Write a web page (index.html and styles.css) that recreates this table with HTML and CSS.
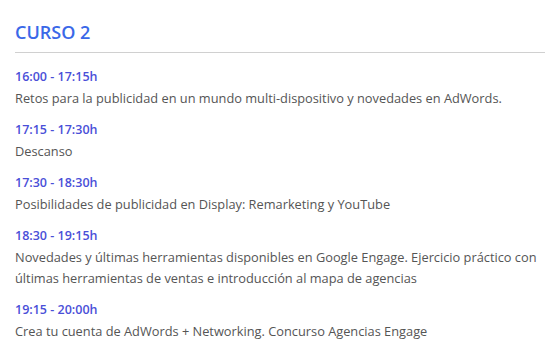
FILE: index.html
```html
<!DOCTYPE html>
<html lang="es">
<head>
<meta charset="utf-8">
<link rel="stylesheet" href="styles.css">
</head>
<body>
<section class="course">
  <h2 class="course-title">CURSO 2</h2>
  <div class="agenda">
    <div class="slot">
      <div class="time">16:00 - 17:15h</div>
      <p class="desc">Retos para la publicidad en un mundo multi-dispositivo y novedades en AdWords.</p>
    </div>
    <div class="slot">
      <div class="time">17:15 - 17:30h</div>
      <p class="desc">Descanso</p>
    </div>
    <div class="slot">
      <div class="time">17:30 - 18:30h</div>
      <p class="desc">Posibilidades de publicidad en Display: Remarketing y YouTube</p>
    </div>
    <div class="slot">
      <div class="time">18:30 - 19:15h</div>
      <p class="desc">Novedades y últimas herramientas disponibles en Google Engage. Ejercicio práctico con últimas herramientas de ventas e introducción al mapa de agencias</p>
    </div>
    <div class="slot">
      <div class="time">19:15 - 20:00h</div>
      <p class="desc">Crea tu cuenta de AdWords + Networking. Concurso Agencias Engage</p>
    </div>
  </div>
</section>
</body>
</html>
```

FILE: styles.css
```css
html, body {
  margin: 0;
  padding: 0;
  background: #ffffff;
}
body {
  font-family: "Open Sans", "Noto Sans", sans-serif;
}
.course {
  width: 530px;
  padding: 19px 0 0 15px;
}
.course-title {
  margin: 0;
  font-size: 18px;
  font-weight: 600;
  line-height: 26px;
  color: #3a68e8;
  padding-bottom: 7px;
  border-bottom: 1px solid #d0d0d0;
}
.agenda {
  display: flex;
  flex-direction: column;
  gap: 10px;
  padding-top: 13px;
}
.time {
  font-size: 12.5px;
  font-weight: 600;
  line-height: 22px;
  color: #4a4fd8;
}
.desc {
  margin: 0;
  font-size: 12.8px;
  line-height: 21px;
  color: #555555;
}
```
